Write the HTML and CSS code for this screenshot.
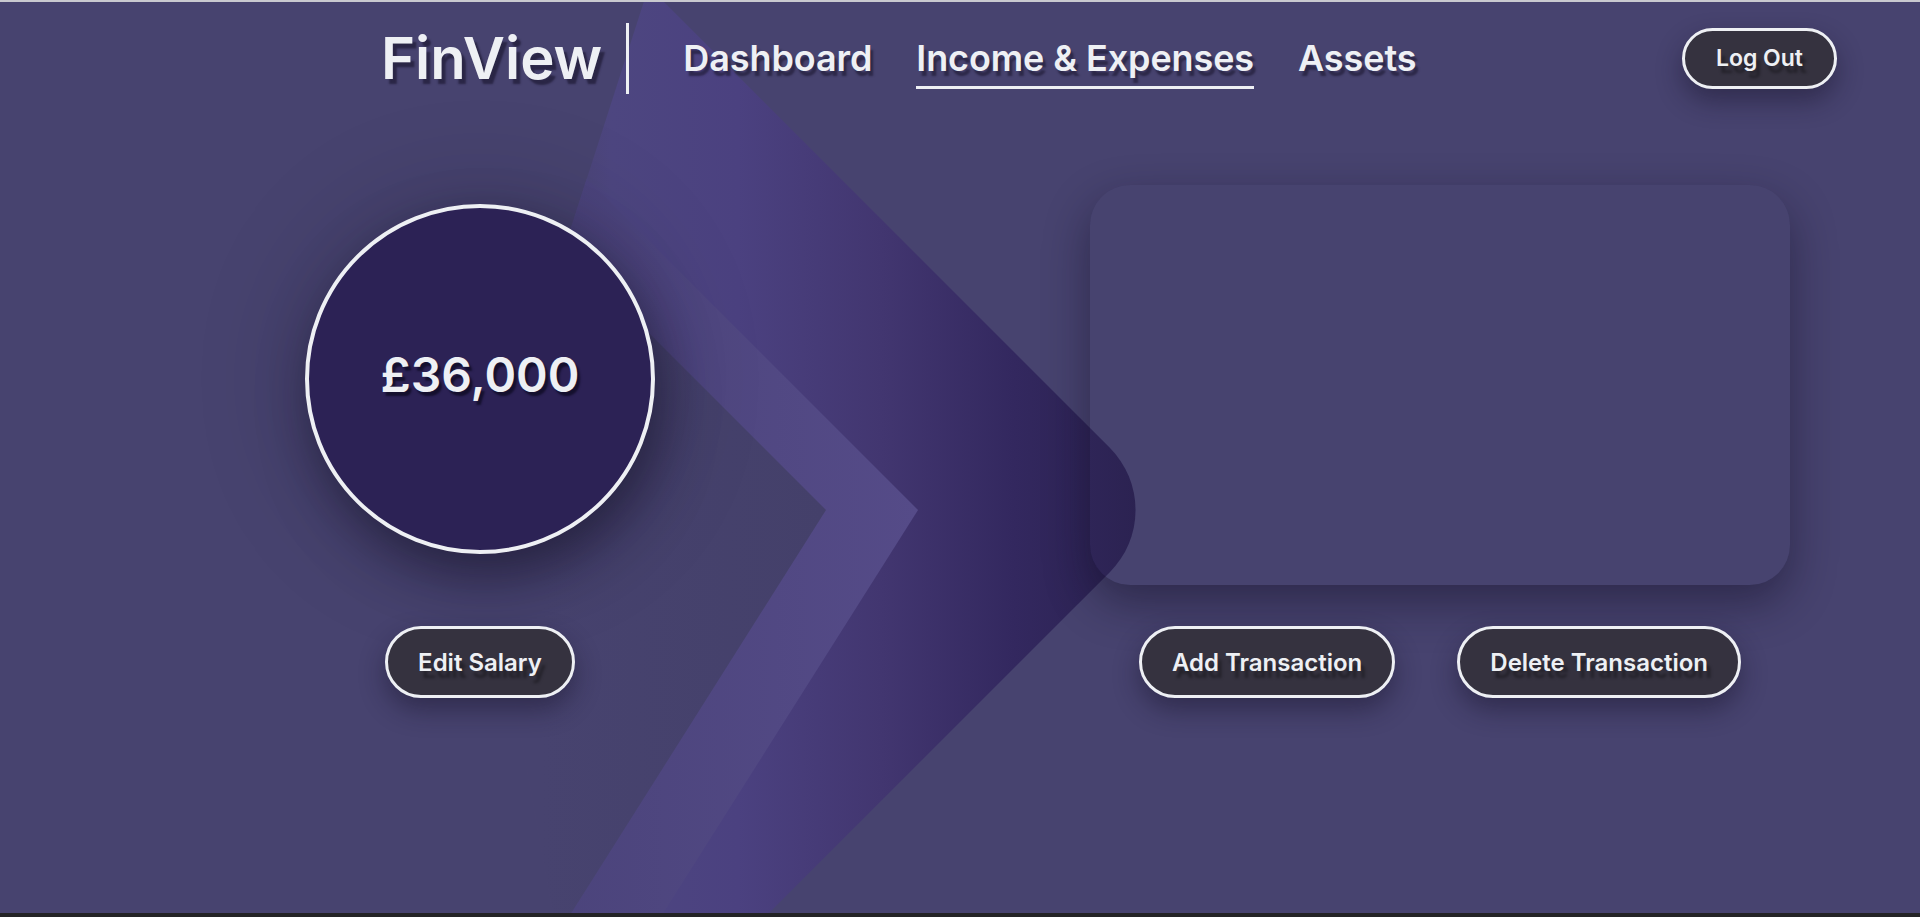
FILE: index.html
```html
<!DOCTYPE html>
<html lang="en">
<head>
<meta charset="utf-8">
<title>FinView – Income &amp; Expenses</title>
<link rel="stylesheet" href="styles.css">
</head>
<body>
<div class="page">
  <svg class="bg-art" width="1920" height="911" viewBox="0 0 1920 911" aria-hidden="true">
    <defs>
      <linearGradient id="gA" gradientUnits="userSpaceOnUse" x1="540" y1="0" x2="1140" y2="0">
        <stop offset="0" stop-color="#49436f"/>
        <stop offset="0.12" stop-color="#4d4680"/>
        <stop offset="0.33" stop-color="#4b4180"/>
        <stop offset="0.57" stop-color="#423670"/>
        <stop offset="0.79" stop-color="#33285f"/>
        <stop offset="1" stop-color="#2a2150"/>
      </linearGradient>
      <linearGradient id="gB" gradientUnits="userSpaceOnUse" x1="520" y1="0" x2="918" y2="0">
        <stop offset="0" stop-color="#4a437a"/>
        <stop offset="1" stop-color="#554b88"/>
      </linearGradient>
      <linearGradient id="gC" gradientUnits="userSpaceOnUse" x1="540" y1="0" x2="826" y2="0">
        <stop offset="0" stop-color="#47436f"/>
        <stop offset="1" stop-color="#44406a"/>
      </linearGradient>
    </defs>
    <path fill="url(#gA)" d="M647 -10 L654 -10 L1109.8 445.8 A88 88 0 0 1 1109.8 570.2 L757 923 L555 923 L480 508 Z"/>
    <path fill="url(#gB)" d="M918 508 L586.7 176.7 L480 508 L560 923 L655.7 923 Z"/>
    <path fill="url(#gC)" d="M826 508 L564.3 246.3 L480 508 L555 923 L563.7 923 Z"/>
  </svg>

  <header class="topbar">
    <div class="brand">FinView</div>
    <span class="divider"></span>
    <nav class="nav">
      <a class="nav-link" href="#">Dashboard</a>
      <a class="nav-link active" href="#">Income &amp; Expenses</a>
      <a class="nav-link" href="#">Assets</a>
    </nav>
    <button class="btn btn-logout" type="button">Log Out</button>
  </header>

  <main class="content">
    <section class="col col-salary">
      <div class="salary-circle"><span class="salary-amount">£36,000</span></div>
      <button class="btn btn-action" type="button">Edit Salary</button>
    </section>
    <section class="col col-tx">
      <div class="tx-card"></div>
      <div class="btn-row">
        <button class="btn btn-action" type="button">Add Transaction</button>
        <button class="btn btn-action" type="button">Delete Transaction</button>
      </div>
    </section>
  </main>
</div>
</body>
</html>
```

FILE: styles.css
```css
html,
body {
  margin: 0;
  padding: 0;
  background: #232325;
}

.page {
  position: relative;
  height: 911px;
  border-top: 2px solid #c9c9cf;
  background: #47436f;
  overflow: hidden;
  font-family: Inter, "Noto Sans", sans-serif;
  color: #eef0f4;
}

.bg-art {
  position: absolute;
  left: 0;
  top: 0;
  z-index: 0;
}

/* ---------- header ---------- */
.topbar {
  position: relative;
  z-index: 1;
  display: flex;
  align-items: center;
  height: 112px;
  padding: 0 83px 0 381px;
}

.brand {
  font-size: 58px;
  font-weight: 600;
  letter-spacing: 0;
  text-shadow: 4px 5px 2px rgba(30, 26, 52, 0.7);
}

.divider {
  width: 3px;
  height: 71px;
  background: #eef0f4;
  margin: 0 54px 0 24px;
}

.nav {
  display: flex;
  gap: 44px;
}

.nav-link {
  color: #eef0f4;
  text-decoration: none;
  font-size: 36px;
  font-weight: 600;
  letter-spacing: -0.1px;
  padding: 9px 0 6px;
  border-bottom: 3px solid transparent;
  text-shadow: 3px 5px 2px rgba(30, 26, 52, 0.65);
}

.nav-link.active {
  border-bottom-color: #eef0f4;
}

/* ---------- buttons ---------- */
.btn {
  font-family: inherit;
  font-weight: 600;
  color: #eef0f4;
  background: #35323f;
  border: 3px solid #eef0f4;
  border-radius: 999px;
  box-shadow: 0 12px 26px rgba(22, 18, 40, 0.45);
  text-shadow: 4px 7px 3px rgba(0, 0, 0, 0.35);
  cursor: pointer;
}

.btn-logout {
  margin-left: auto;
  height: 61px;
  padding: 0 31px;
  font-size: 23px;
}

.btn-action {
  height: 72px;
  padding: 0 30px;
  font-size: 24px;
}

/* ---------- main ---------- */
.content {
  position: relative;
  z-index: 1;
  display: grid;
  grid-template-columns: 1fr 1fr;
}

.col {
  display: flex;
  flex-direction: column;
  align-items: center;
}

.col-salary {
  padding-top: 90px;
  gap: 72px;
}

.col-tx {
  padding-top: 71px;
  gap: 41px;
}

.salary-circle {
  box-sizing: border-box;
  width: 350px;
  height: 350px;
  border-radius: 50%;
  border: 4px solid #eef0f4;
  background: #2c2255;
  display: flex;
  align-items: center;
  justify-content: center;
  box-shadow: 8px 22px 50px rgba(16, 12, 34, 0.5), 0 0 110px rgba(16, 12, 34, 0.22);
}

.salary-amount {
  font-size: 48px;
  font-weight: 600;
  padding-bottom: 10px;
  text-shadow: 3px 4px 2px rgba(12, 8, 30, 0.7);
}

.tx-card {
  width: 700px;
  height: 400px;
  border-radius: 40px;
  background: rgba(74, 70, 116, 0.04);
  box-shadow: 0 18px 45px rgba(16, 12, 34, 0.45);
}

.btn-row {
  display: flex;
  gap: 62px;
}
```
